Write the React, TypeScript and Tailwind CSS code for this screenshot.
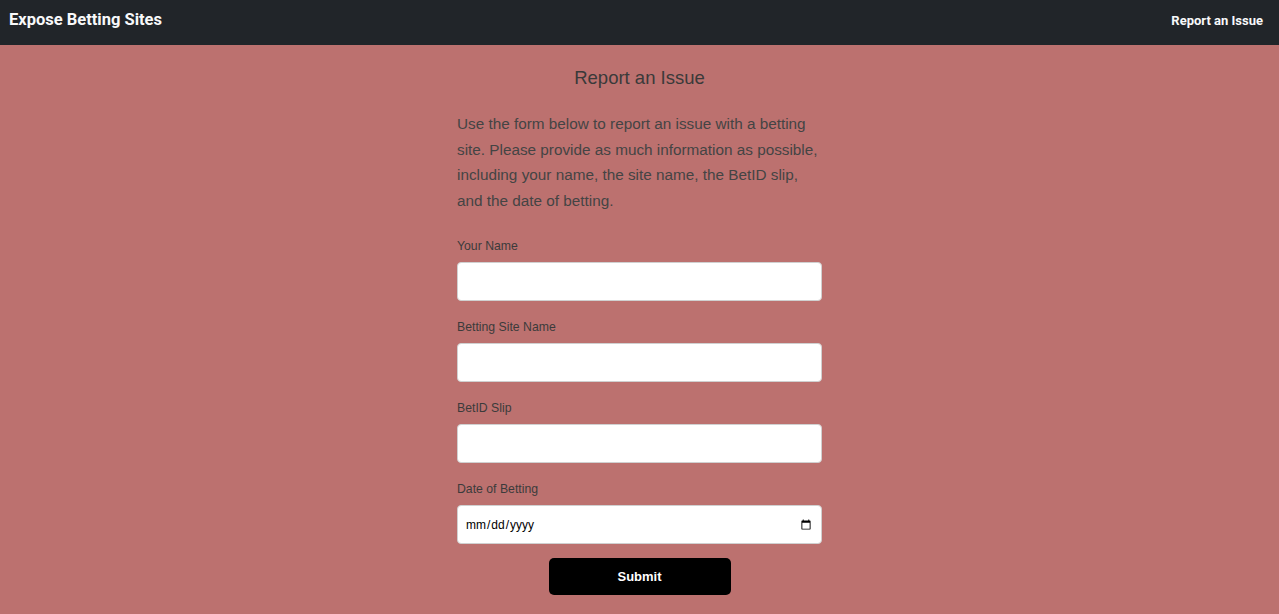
export default function App() {
  const fields = [
    { label: "Your Name", type: "text" },
    { label: "Betting Site Name", type: "text" },
    { label: "BetID Slip", type: "text" },
  ];

  return (
    <div className="min-h-[614px] bg-[#bc716f] font-['Liberation_Sans',Arial,sans-serif]">
      {/* Navbar */}
      <nav className="h-[45px] bg-[#212529] flex items-center justify-between pl-[9px] pr-[16px] pb-[4px] font-['Roboto',sans-serif]">
        <span className="text-[#f8f9fa] font-bold text-[16.5px]">Expose Betting Sites</span>
        <a className="text-[#f8f9fa] font-bold text-[13px]">Report an Issue</a>
      </nav>

      {/* Form */}
      <main className="w-[365px] mx-auto">
        <h1 className="text-center text-[18.5px] leading-[22px] text-[#3a3a3a] pt-[22px]">
          Report an Issue
        </h1>
        <p className="mt-[22px] text-[15.3px] leading-[25.5px] text-[#444]">
          Use the form below to report an issue with a betting site. Please provide as much
          information as possible, including your name, the site name, the BetID slip, and the
          date of betting.
        </p>

        <form className="mt-[26px]">
          {fields.map((f) => (
            <div key={f.label} className="mb-[19px]">
              <label className="block text-[12.25px] leading-[14px] text-[#3b3b3b] mb-[9px]">
                {f.label}
              </label>
              <input
                type={f.type}
                className="block w-full h-[39px] bg-white border border-[#d0d0d0] rounded-[4px] px-[8px] outline-none"
              />
            </div>
          ))}
          <div>
            <label className="block text-[12.25px] leading-[14px] text-[#3b3b3b] mb-[9px]">
              Date of Betting
            </label>
            <input
              type="date"
              className="block w-full h-[39px] bg-white border border-[#d0d0d0] rounded-[4px] px-[7px] text-[12px] text-black outline-none"
            />
          </div>
          <div className="flex justify-center mt-[14px]">
            <button
              type="button"
              className="w-[182px] h-[37px] bg-black text-white text-[13px] font-bold rounded-[5px]"
            >
              Submit
            </button>
          </div>
        </form>
      </main>
    </div>
  );
}
